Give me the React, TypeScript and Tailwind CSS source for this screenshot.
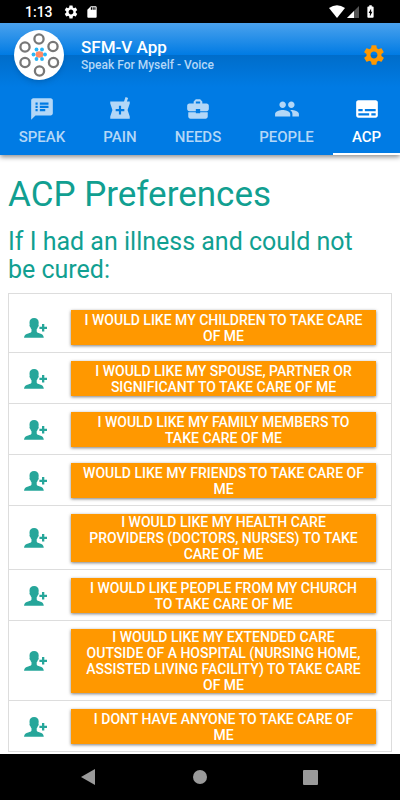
import type { ReactNode } from "react";
import clsx from "clsx";
import { IoMdSettings } from "react-icons/io";
import {
  MdBatteryChargingFull,
  MdBusinessCenter,
  MdPeople,
  MdSdCard,
  MdSettings,
  MdSpeakerNotes,
  MdSubtitles,
} from "react-icons/md";

type Tab = { label: string; icon: ReactNode; width: string; active?: boolean };

function PharmacyIcon() {
  return (
    <svg viewBox="0 0 24 24" className="size-[26px]" fill="currentColor" aria-hidden="true">
      <path d="M21 5h-2.64l1.14-3.14L17.15 1l-1.46 4H3v2l2 6-2 6v2h18v-2l-2-6 2-6V5zm-5 9h-3v3h-2v-3H8v-2h3V9h2v3h3v2z" />
    </svg>
  );
}

function PersonAddIcon() {
  return (
    <svg viewBox="0 0 24 20" className="h-5 w-6 shrink-0" fill="#26a69a" aria-hidden="true">
      <path d="M10.100 0C7.300 0 5.500 1.700 5.500 4.500c0 .7.1 1.300.2 1.900-.3.3-.3.900-.1 1.600.2.600.4.900.7 1 .2.900.6 1.700 1.200 2.300v2.300c-.3 1-1.600 1.400-3.300 2C1.900 16.400.3 17 0 19.800h19.800c-.3-2.800-1.700-3.400-3.900-4.200-1.700-.6-2.900-1-3.200-2v-2.300c.6-.6 1-1.400 1.200-2.300.3-.1.500-.4.7-1 .2-.7.2-1.300-.1-1.600.1-.6.2-1.200.2-1.900C14.700 1.700 12.900 0 10.100 0Z" />
      <path d="M18 6.100h2.300v2.600h2.700v2.300h-2.700v2.500H18V11h-2.600V8.700H18Z" />
    </svg>
  );
}

const tabs: Tab[] = [
  { label: "SPEAK", icon: <MdSpeakerNotes className="size-[26px]" />, width: "grow-[84]" },
  { label: "PAIN", icon: <PharmacyIcon />, width: "grow-[72]" },
  { label: "NEEDS", icon: <MdBusinessCenter className="size-[26px]" />, width: "grow-[84]" },
  { label: "PEOPLE", icon: <MdPeople className="size-[26px]" />, width: "grow-[93]" },
  { label: "ACP", icon: <MdSubtitles className="size-[26px]" />, width: "grow-[67]", active: true },
];

const options = [
  "I would like my children to take care of me",
  "I would like my spouse, partner or significant to take care of me",
  "I would like my family members to take care of me",
  "would like my friends to take care of me",
  "I would like my health care providers (doctors, nurses) to take care of me",
  "I would like people from my church to take care of me",
  "I would like my extended care outside of a hospital (nursing home, assisted living facility) to take care of me",
  "I dont have anyone to take care of me",
];

function StatusBar() {
  return (
    <div className="flex h-[23px] items-center bg-black pl-[25px] pr-[22px] text-white">
      <span className="text-sm font-medium">1:13</span>
      <MdSettings className="ml-[10px] size-4" />
      <MdSdCard className="ml-[6px] size-[14px]" />
      <svg viewBox="0 0 16 13" className="ml-auto h-[13px] w-4" aria-hidden="true">
        <path d="M8 13 0 3Q8-2.500 16 3Z" fill="#fff" />
      </svg>
      <svg viewBox="0 0 12 12" className="ml-[2px] size-3" aria-hidden="true">
        <path d="M12 0v12H0Z" fill="#555" />
        <path d="M7 5v7H0Z" fill="#fff" />
      </svg>
      <MdBatteryChargingFull className="ml-1 size-[15px]" />
    </div>
  );
}

function Logo() {
  const ring = [
    [25, 9],
    [39, 16.500],
    [39.500, 32.500],
    [25.500, 41],
    [11, 32.500],
    [11, 17],
  ];
  const dots = [
    [22.500, 19.500],
    [28, 19.500],
    [31, 24.500],
    [28, 29],
    [22.500, 29],
    [19.500, 24.500],
  ];
  return (
    <svg viewBox="0 0 50 50" className="size-[50px] rounded-full bg-white shadow-md" aria-hidden="true">
      {ring.map(([cx, cy]) => (
        <circle key={`${cx}-${cy}`} cx={cx} cy={cy} r="4.600" fill="none" stroke="#777" strokeWidth="2.300" />
      ))}
      <ellipse cx="25.500" cy="24.500" rx="4" ry="3.200" fill="#ff8a65" />
      {dots.map(([cx, cy]) => (
        <circle key={`${cx}-${cy}`} cx={cx} cy={cy} r="1.900" fill="#29b6f6" />
      ))}
    </svg>
  );
}

function Header() {
  return (
    <header className="relative bg-[#007be4] shadow-[0_2px_5px_rgba(0,0,0,0.45)]">
      <div className="flex h-16 items-center bg-linear-[180deg,#4ba2ed_0%,#007be4_50%,#006dca_50%,#007be4_100%] px-[14px]">
        <Logo />
        <div className="ml-[17px] grow">
          <p className="text-[17px] leading-5 font-medium text-white">SFM-V App</p>
          <p className="text-xs leading-4 font-medium text-[#b3d7f7]">Speak For Myself - Voice</p>
        </div>
        <button type="button" aria-label="Settings" className="text-[#ff9800]">
          <IoMdSettings className="size-6" />
        </button>
      </div>
      <nav className="flex h-[68px]">
        {tabs.map(({ label, icon, width, active }) => (
          <a
            key={label}
            href={`#${label.toLowerCase()}`}
            aria-current={active ? "page" : undefined}
            className={clsx(
              "flex basis-0 flex-col items-center border-b-2 pt-2 text-[15px] font-medium",
              width,
              active ? "border-white text-white" : "border-transparent text-[#b3d7f7]"
            )}
          >
            <span className="flex h-7 items-center">{icon}</span>
            <span className="mt-1 leading-5">{label}</span>
          </a>
        ))}
      </nav>
    </header>
  );
}

function SystemNav() {
  return (
    <div className="flex h-[46px] items-center justify-between bg-black pr-[82px] pl-20 text-[#9a9a9a]">
      <button type="button" aria-label="Back">
        <svg viewBox="0 0 16 16" className="size-4" fill="currentColor">
          <path d="M1 8 15 0v16Z" />
        </svg>
      </button>
      <button type="button" aria-label="Home" className="size-[14px] rounded-full bg-current" />
      <button type="button" aria-label="Recent apps" className="size-[15px] rounded-[1px] bg-current" />
    </div>
  );
}

export default function App() {
  return (
    <div className="flex min-h-screen flex-col bg-white font-[Roboto,sans-serif]">
      <StatusBar />
      <Header />
      <main className="grow px-2 pt-5 text-[#119f91]">
        <h1 className="text-[35px] leading-10">ACP Preferences</h1>
        <h2 className="mt-[13px] pr-5 text-[25px] leading-7">If I had an illness and could not be cured:</h2>
        <ul className="mt-[9px] border border-[#dddddd]">
          {options.map((text) => (
            <li
              key={text}
              className="flex items-center border-b border-[#dddddd] pt-2 pr-[15px] pb-[7px] pl-[15px] first:pt-4 last:border-b-0"
            >
              <PersonAddIcon />
              <button
                type="button"
                className="ml-[23px] min-h-[35px] grow bg-[#ff9800] px-3 text-sm leading-4 font-medium text-white uppercase shadow-[0_1px_3px_rgba(0,0,0,0.5)]"
              >
                {text}
              </button>
            </li>
          ))}
        </ul>
      </main>
      <SystemNav />
    </div>
  );
}
